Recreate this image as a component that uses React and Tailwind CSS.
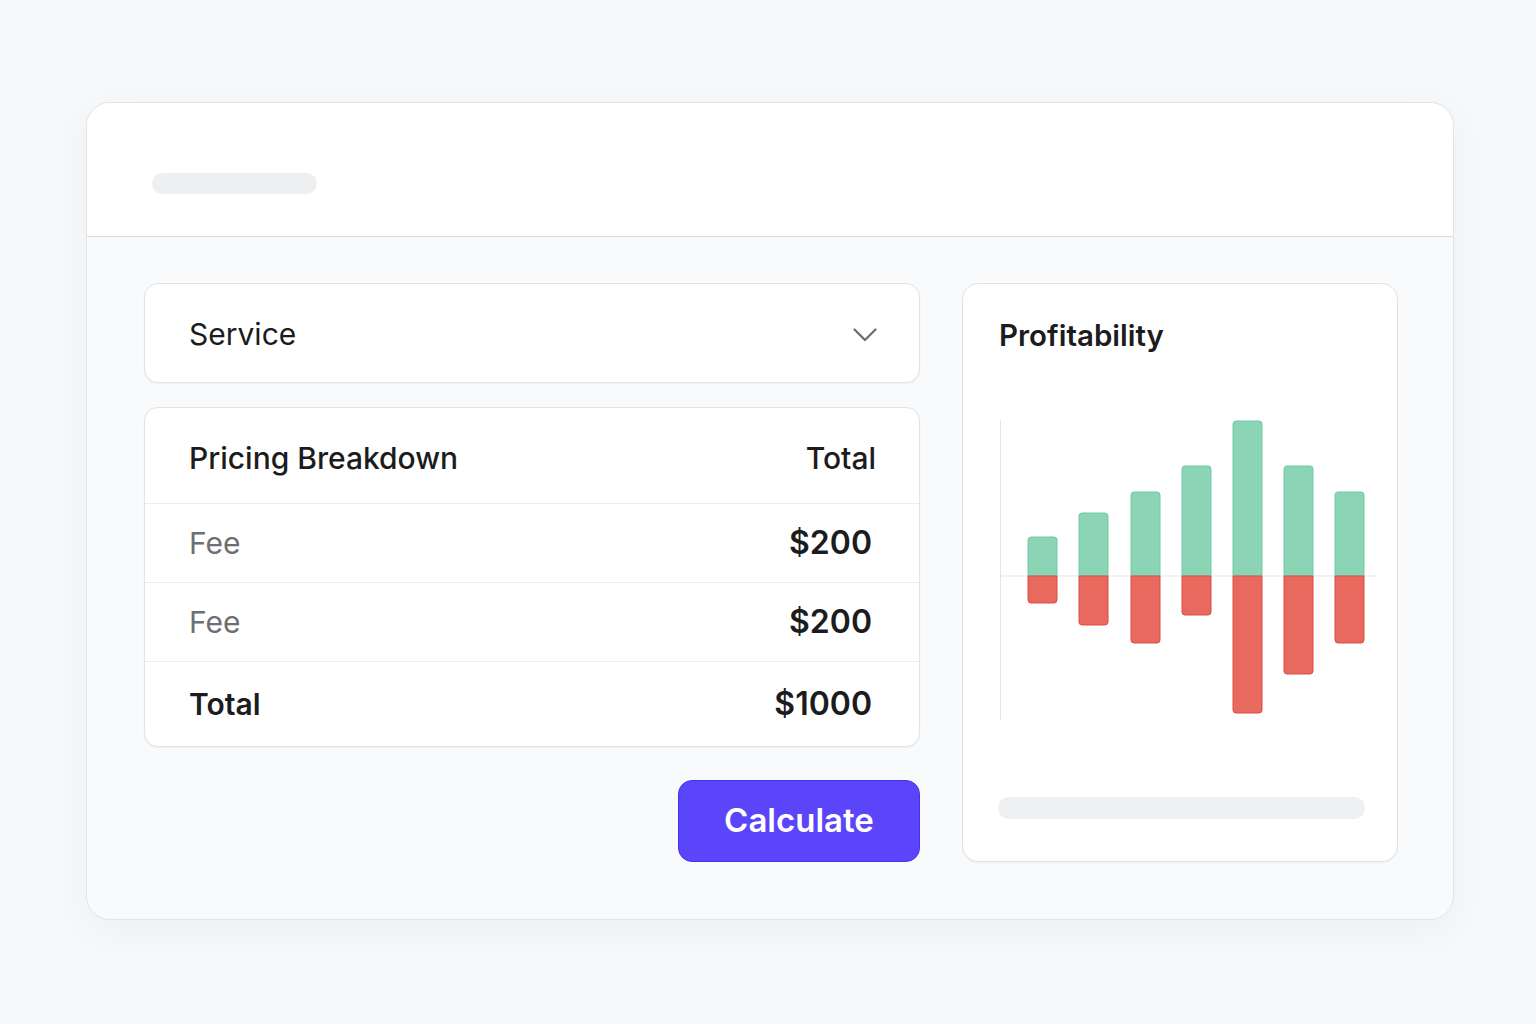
import React from 'react';

const bars = [
    { x: 29, top: 118, bottom: 184 },
    { x: 80, top: 94, bottom: 206 },
    { x: 132, top: 73, bottom: 224 },
    { x: 183, top: 47, bottom: 196 },
    { x: 234, top: 2, bottom: 294 },
    { x: 285, top: 47, bottom: 255 },
    { x: 336, top: 73, bottom: 224 },
];

const BASE = 157;
const W = 29;
const R = 3;

// rounded only on the outer end of each half
const upPath = (x, top) =>
    `M${x} ${BASE} V${top + R} Q${x} ${top} ${x + R} ${top} H${x + W - R} Q${x + W} ${top} ${x + W} ${top + R} V${BASE} Z`;
const downPath = (x, bottom) =>
    `M${x} ${BASE} V${bottom - R} Q${x} ${bottom} ${x + R} ${bottom} H${x + W - R} Q${x + W} ${bottom} ${x + W} ${bottom - R} V${BASE} Z`;

const ProfitChart = () => (
    <svg width="380" height="302" viewBox="0 0 380 302" className="block">
        <line x1="1.5" y1="1" x2="1.5" y2="301" stroke="#e3e5e8" strokeWidth="1" />
        <line x1="1" y1={BASE} x2="377" y2={BASE} stroke="#e3e5e8" strokeWidth="1" />
        {bars.map((b, i) => (
            <g key={i}>
                <path d={upPath(b.x, b.top)} fill="#8bd4b6" stroke="#72c9a6" strokeWidth="1" />
                <path d={downPath(b.x, b.bottom)} fill="#e86a5f" stroke="#df4c41" strokeWidth="1" />
            </g>
        ))}
    </svg>
);

const Row = ({ label, value, bold, last }) => (
    <div className={`flex items-center justify-between pl-[44px] pr-[47px] ${last ? 'h-[84px]' : 'h-[79px] border-b border-[#ececef]'}`}>
        <span className={bold ? 'text-[30px] font-semibold text-[#1c1c1e]' : 'text-[30px] text-[#6e6e73]'}>{label}</span>
        <span className="text-[32px] font-semibold text-[#1c1c1e]">{value}</span>
    </div>
);

export default function App() {
    return (
        <div className="h-[1024px] w-full bg-[#f7f8f9] pl-[86px] pt-[102px] font-['Inter',sans-serif]">
            <div className="w-[1368px] overflow-hidden rounded-[24px] border border-[#e2e4e9] bg-[#f9fafb] shadow-[0_10px_40px_rgba(0,0,0,0.04)]">
                <div className="h-[134px] border-b border-[#d9dbe2] bg-white pl-[65px] pt-[70px]">
                    <div className="h-[21px] w-[165px] rounded-full bg-[#eeeff1]" />
                </div>

                <div className="flex gap-[42px] pl-[57px] pt-[46px] pb-[57px]">
                    <div className="flex w-[776px] flex-col">
                        <div className="flex h-[100px] items-center justify-between rounded-[14px] border border-[#e1e3e7] bg-white pl-[44px] pr-[42px] pt-[3px] shadow-[0_1px_2px_rgba(0,0,0,0.05)]">
                            <span className="text-[30px] text-[#1c1c1e]">Service</span>
                            <svg width="24" height="14" viewBox="0 0 24 14" fill="none">
                                <path d="M1.5 1.5 L12 12 L22.5 1.5" stroke="#6b6b70" strokeWidth="2.2" strokeLinecap="round" strokeLinejoin="round" />
                            </svg>
                        </div>

                        <div className="mt-[24px] overflow-hidden rounded-[14px] border border-[#e1e3e7] bg-white shadow-[0_1px_2px_rgba(0,0,0,0.05)]">
                            <div className="flex h-[96px] items-center justify-between border-b border-[#ececef] pl-[44px] pr-[43px] pt-[5px]">
                                <span className="text-[30px] font-medium text-[#1c1c1e]">Pricing Breakdown</span>
                                <span className="text-[30px] font-medium text-[#1c1c1e]">Total</span>
                            </div>
                            <Row label="Fee" value="$200" />
                            <Row label="Fee" value="$200" />
                            <Row label="Total" value="$1000" bold last />
                        </div>

                        <div className="mt-[33px] flex justify-end">
                            <button className="h-[82px] w-[242px] rounded-[14px] border border-[#4a34ea] bg-[#5b45fb] text-[33px] font-semibold text-white">
                                Calculate
                            </button>
                        </div>
                    </div>

                    <div className="flex h-[579px] w-[436px] flex-col rounded-[16px] border border-[#e1e3e7] bg-white pl-[36px] pt-[33px] shadow-[0_1px_2px_rgba(0,0,0,0.05)]">
                        <h2 className="text-[29.5px] leading-[36px] font-semibold text-[#1c1c1e]">Profitability</h2>
                        <div className="mt-[66px]">
                            <ProfitChart />
                        </div>
                        <div className="mt-[76px] -ml-px h-[22px] w-[367px] rounded-full bg-[#eff0f2]" />
                    </div>
                </div>
            </div>
        </div>
    );
}
